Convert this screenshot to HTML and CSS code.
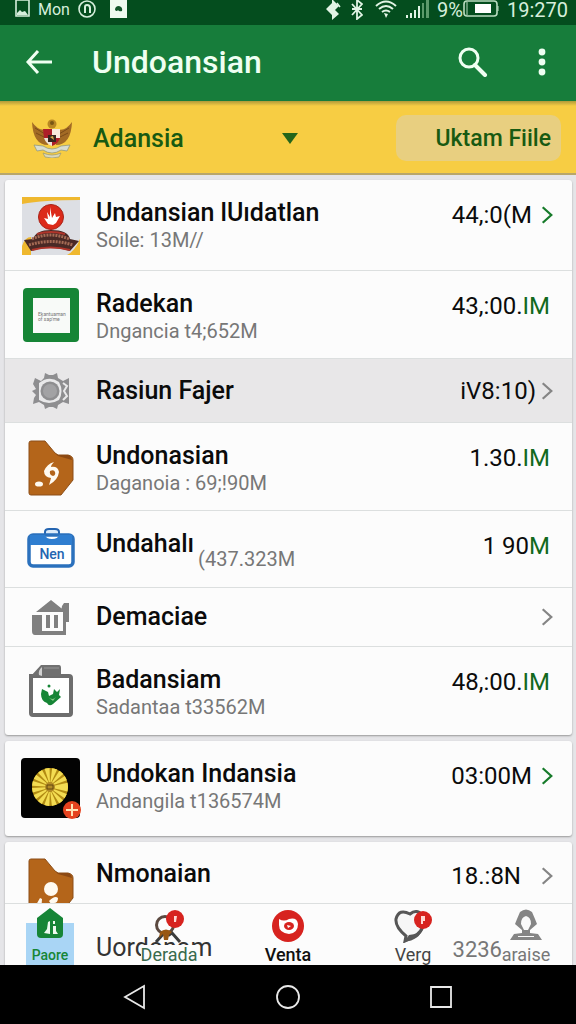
FILE: index.html
```html
<!DOCTYPE html>
<html lang="id">

<head>
  <meta charset="UTF-8" />
  <meta name="viewport" content="width=device-width, initial-scale=1.0" />
  <title>Undoansian</title>
  <link rel="stylesheet" href="styles.css">
</head>

<body>
  <!-- shared shapes -->
  <svg class="defs" aria-hidden="true">
    <symbol id="chevron" viewBox="0 0 14 22">
      <path d="M2 2l10 9-10 9" fill="none" stroke="currentColor" stroke-width="2.6" />
    </symbol>
    <symbol id="folder" viewBox="0 0 46 56">
      <path d="M3 1h14l10 12 3 2h10q5 1 5 5v20L33 55H3q-2 0-2-2V3q0-2 2-2z" fill="#b4651a" stroke="#8c4f19" />
      <path d="M27 13l3 3 14 4q-1-5-5-5h-9z" fill="#8c4913" />
    </symbol>
  </svg>

  <div class="app">
    <div class="status-bar">
      <div class="status-left">
        <svg width="15" height="17" viewBox="0 0 15 17"><path d="M1 0h13v16H1z" fill="none" stroke="#d6efdc" stroke-width="1.6" /><path d="M2 15v-2l3-3 2 2 3-1 3 4z" fill="#d6efdc" /></svg>
        <span>Mon</span>
        <svg width="18" height="18" viewBox="0 0 18 18"><circle cx="9" cy="9" r="8" fill="none" stroke="#d6efdc" stroke-width="1.6" /><path d="M7 13V7q0-2 2-2 3 0 3 3v5" fill="none" stroke="#d6efdc" stroke-width="2" /></svg>
        <svg class="status-card" width="17" height="18" viewBox="0 0 17 18"><path d="M0 0h17v18H0z" fill="#eefaf0" /><path d="M5 10q0-4 4-4 4 1 3 5-3 1-4-1-1 2-3 0z" fill="#12552a" /></svg>
      </div>
      <div class="status-right">
        <svg width="16" height="20" viewBox="0 0 16 20"><path d="M7 0v20l7-6-4-4 4-4-6-6M1 9l6-6v12z" fill="#e2f4e5" /><path d="M9 5v10M12 3l3 4" stroke="#e2f4e5" stroke-width="1.5" /></svg>
        <svg class="bt" width="12" height="20" viewBox="0 0 12 20"><path d="M1 4l10 11-5 4V0l5 4L1 15M1 9h10" fill="none" stroke="#e2f4e5" stroke-width="1.8" /></svg>
        <svg width="22" height="18" viewBox="0 0 22 18"><path d="M1 6q10-9 20 0M4 9q7-6 14 0M7 12q4-3 8 0" fill="none" stroke="#e2f4e5" stroke-width="2" /><path d="M9 13l4 1-2 4z" fill="#e2f4e5" /></svg>
        <svg width="24" height="18" viewBox="0 0 24 18"><path d="M1 18v-3h2v3zM5 18v-5h2v5zM9 18v-8h2v8zM13 18V6h2v12z" fill="#e2f4e5" /><path d="M17 18V3h2v15zM21 18V0h3v18z" fill="#5c9a6b" /></svg>
        <span>9%</span>
        <svg class="battery" width="36" height="18" viewBox="0 0 36 18"><rect x="1" y="1" width="33" height="15" rx="3" fill="none" stroke="#b9dcc0" stroke-width="1.6" /><path d="M4 2v13M35 6v5" stroke="#b9dcc0" /><path d="M12 4h16v9H12z" fill="#fff" /></svg>
        <span>19:270</span>
      </div>
    </div>

    <header class="app-bar">
      <button class="icon-btn" aria-label="Back">
        <svg width="28" height="26" viewBox="0 0 28 26"><path d="M13 2L3 13l10 11M3 13h24" fill="none" stroke="#effff2" stroke-width="3" /></svg>
      </button>
      <h1>Undoansian</h1>
      <button class="icon-btn" aria-label="Search">
        <svg width="30" height="30" viewBox="0 0 30 30"><circle cx="11" cy="11" r="9" fill="none" stroke="#effff2" stroke-width="3" /><path d="M17 18l10 10" stroke="#effff2" stroke-width="4" stroke-linecap="round" /></svg>
      </button>
      <button class="icon-btn menu-btn" aria-label="Menu">
        <svg width="8" height="28" viewBox="0 0 8 28"><g fill="#effff2"><circle cx="4" cy="4" r="3.4" /><circle cx="4" cy="14" r="3.4" /><circle cx="4" cy="24" r="3.4" /></g></svg>
      </button>
    </header>

    <div class="filter-bar">
      <svg class="crest" width="42" height="40" viewBox="0 0 42 40">
        <path d="M1 4q7 10 15 7l1 16Q2 27 1 4zM41 4q-7 10-15 7l-1 16Q40 27 41 4z" fill="#a36b25" />
        <path d="M4 10l10 6M5 15l10 5M38 10l-10 6M37 15l-10 5" stroke="#7b4b18" />
        <circle cx="21" cy="6" r="4.5" fill="#b88722" /><circle cx="21" cy="5" r="2" fill="#785614" />
        <path d="M12 11h9v9h-8z" fill="#ad1e29" /><path d="M21 11h8v9h-8z" fill="#f7e9dc" />
        <path d="M13 20h8v8q-6-2-8-8z" fill="#eee1d8" /><path d="M21 20h8q-2 6-8 8z" fill="#ad1e29" />
        <path d="M17 17h8v7h-8z" fill="#36251f" /><path d="M19 19l3-1 1 4z" fill="#d7ad49" />
        <path d="M3 27l9 1q9 6 18 0l9-1-3 6-6-1q-9 6-18 0l-6 1z" fill="#d8ddd0" stroke="#88927b" stroke-width=".7" />
        <path d="M12 35q9 4 18 0l-2 4q-7 2-14 0z" fill="#d9d8bd" stroke="#9a986c" stroke-width=".7" />
      </svg>
      <button class="region">
        <span>Adansia</span>
        <svg width="16" height="11" viewBox="0 0 16 11"><path d="M0 0h16L8 11z" fill="#24651a" /></svg>
      </button>
      <button class="file-btn">Uktam Fiile</button>
    </div>

    <main class="content">
      <section class="card">
        <a href="#" class="row row-tall">
          <span class="thumb">
            <svg width="58" height="58" viewBox="0 0 58 58">
              <path d="M0 0h58v58H0z" fill="#dddfe4" /><path d="M0 0h58v3Q22 3 0 7zM0 49q3-9 9-9v18H0zM45 58q8-4 13-16v16z" fill="#efb82f" />
              <circle cx="29" cy="20" r="12.5" fill="#dc2a1a" stroke="#a82419" />
              <path d="M28 10l2 11 3-5 1 4 4-1-4 7-3 2-5-1-4-6 4 1-1-7 3 5z" fill="#fff" />
              <path d="M2 43l9-1q3-9 18-9 17 0 19 9l9 2-9 10q-20-7-39 0z" fill="#4a2925" />
              <path d="M10 42q18-8 37 0M7 48q22-7 44 0" fill="none" stroke="#a56b55" stroke-width="3" stroke-dasharray="2 1" />
              <path d="M15 37q14-4 28 0M10 53q18-5 38 0" fill="none" stroke="#af352b" stroke-width="2" />
            </svg>
          </span>
          <span class="text"><span class="name">Undansian lUıdatlan</span><span class="sub">Soile: 13M//</span></span>
          <span class="value">44,:0(M</span>
          <svg class="chevron green"><use href="#chevron" /></svg>
        </a>
        <a href="#" class="row row-sub">
          <span class="thumb">
            <svg width="58" height="54" viewBox="0 0 58 54">
              <rect x="1" width="56" height="54" rx="4" fill="#168536" /><path d="M11 10h37v35H11z" fill="#f8faf8" />
              <text x="16" y="28" class="tiny">Ekantuaman</text><text x="16" y="33" class="tiny">of sap'me</text>
            </svg>
          </span>
          <span class="text"><span class="name">Radekan</span><span class="sub">Dngancia t4;652M</span></span>
          <span class="value">43,:00.<b>IM</b></span>
        </a>
        <a href="#" class="row row-single row-active">
          <span class="thumb">
            <svg width="40" height="38" viewBox="0 0 40 38">
              <path d="M13 6l1-5 4 2h4l4-2 1 5 5 3 6-3v26l-6-2-5 3-1 4-4-2h-4l-4 2-1-4-5-3-6 2 1-6 2-3-4-4 4-2-3-5 2-6 6 3z" fill="#8e8e90" />
              <path d="M8 11q10-8 20-1 5 9 0 18-10 6-20 0z" fill="#e9e9ea" /><circle cx="19" cy="19" r="9.5" fill="#8e8e90" /><circle cx="19" cy="19" r="7" fill="#a2a2a4" />
              <path d="M32 11l4 3-3 5 3 5-4 4" fill="none" stroke="#e9e9ea" stroke-width="2" />
            </svg>
          </span>
          <span class="text"><span class="name">Rasiun Fajer</span></span>
          <span class="value">iV8:10)</span>
          <svg class="chevron"><use href="#chevron" /></svg>
        </a>
        <a href="#" class="row row-sub">
          <span class="thumb">
            <svg width="46" height="56" viewBox="0 0 46 56">
              <use href="#folder" />
              <path d="M26 22q-7 2-10 9 0 6 7 7-1 4-2 7 9-5 10-13-1-6-8-5 0-2 3-5zm-4 9q4-2 5 1 1 3-2 4-4-1-3-5z" fill="#fffaf0" fill-rule="evenodd" />
              <ellipse cx="11" cy="44" rx="4" ry="2.6" fill="#fffaf0" />
            </svg>
          </span>
          <span class="text"><span class="name">Undonasian</span><span class="sub">Daganoia : 69;!90M</span></span>
          <span class="value">1.30.<b>IM</b></span>
        </a>
        <a href="#" class="row row-inline">
          <span class="thumb">
            <svg width="48" height="40" viewBox="0 0 48 40">
              <path d="M18 8V4q0-3 4-3h6q4 0 4 3v4" fill="#dcebfa" stroke="#2565b1" stroke-width="2" />
              <rect x="2" y="7" width="44" height="31" rx="4" fill="#fff" stroke="#2b71bd" stroke-width="3.5" />
              <path d="M3 7h15q1 4 7 4t7-4h13v10H3z" fill="#2f7ed0" />
              <text x="25" y="31" text-anchor="middle" class="bag-label">Nen</text>
            </svg>
          </span>
          <span class="text"><span class="name">Undahalı</span><span class="sub">(437.323M</span></span>
          <span class="value">1 90<b>M</b></span>
        </a>
        <a href="#" class="row row-single row-short">
          <span class="thumb">
            <svg width="40" height="37" viewBox="0 0 40 37">
              <path d="M5 13L20 1l15 12zM31 7l2-3h5v19h-3v13H4q-3 0-3-4V16h10v16h21V13h-2z" fill="#808080" />
              <path d="M15 16h4v13h-4zM23 16h4v13h-4z" fill="#808080" />
            </svg>
          </span>
          <span class="text"><span class="name">Demaciae</span></span>
          <svg class="chevron"><use href="#chevron" /></svg>
        </a>
        <a href="#" class="row row-sub">
          <span class="thumb">
            <svg width="44" height="53" viewBox="0 0 44 53">
              <path d="M4 12h36q2 0 2 2v35q0 2-2 2H4q-2 0-2-2V12z" fill="#fff" stroke="#6d6d6d" stroke-width="4" />
              <path d="M1 13L12 1h18q2 0 2 3v8H1z" fill="#707070" /><path d="M13 3q-4 3-3 8l3 1z" fill="#d1d1d1" /><path d="M15 4h15" stroke="#969696" />
              <path d="M13 25l6 3 1 4 4-2 1-5 3 3 3-3-1 6 2 2-8 7q-4 3-6-1-6-2-6-9z" fill="#168536" /><path d="M19 33q5 4 8 0l-3 4z" fill="#80c783" /><circle cx="20" cy="22" r="1.5" fill="#168536" />
            </svg>
          </span>
          <span class="text"><span class="name">Badansiam</span><span class="sub">Sadantaa t33562M</span></span>
          <span class="value">48,:00.<b>IM</b></span>
        </a>
      </section>

      <section class="card">
        <a href="#" class="row row-tall row-large">
          <span class="thumb">
            <svg width="60" height="62" viewBox="0 0 60 62">
              <rect width="59" height="60" rx="4" fill="#030303" /><ellipse cx="29" cy="29" rx="18" ry="19" fill="#b28b13" />
              <ellipse cx="29" cy="29" rx="11" ry="12" fill="none" stroke="#f3dc52" stroke-width="14" stroke-dasharray="3 1.6" />
              <circle cx="29" cy="29" r="5" fill="#b38b26" /><path d="M26 27h6v4h-6z" fill="none" stroke="#624610" />
              <circle cx="51" cy="52" r="9" fill="#e5431f" /><path d="M51 46v12M45 52h12" stroke="#ffe2b5" stroke-width="2" />
            </svg>
          </span>
          <span class="text"><span class="name">Undokan Indansia</span><span class="sub">Andangila t136574M</span></span>
          <span class="value">03:00M</span>
          <svg class="chevron green"><use href="#chevron" /></svg>
        </a>
      </section>

      <section class="card">
        <a href="#" class="row row-cut">
          <span class="thumb">
            <svg width="46" height="56" viewBox="0 0 46 56">
              <use href="#folder" />
              <circle cx="23" cy="31" r="7" fill="#fffaf0" /><path d="M8 47l4-7 2 1-1 15H9zM21 43q6-6 9-3 0 5-4 5 4 4 2 11h-8v-7h5z" fill="#fffaf0" />
            </svg>
          </span>
          <span class="text"><span class="name">Nmonaian</span></span>
          <span class="value">18.:8N</span>
          <svg class="chevron"><use href="#chevron" /></svg>
        </a>
        <a href="#" class="row row-under">
          <span class="thumb"></span>
          <span class="text"><span class="name">Uordonam</span></span>
          <span class="value">3236</span>
        </a>
      </section>

      <nav class="tabs">
        <a href="#" class="tab tab-home">
          <svg width="28" height="32" viewBox="0 0 28 32"><path d="M14 1l13 10v16q0 4-4 4H5q-4 0-4-4V11z" fill="#168536" /><path d="M8 26l3-4 1-7 2-1v13zM17 14h2v3h-2zM17 19h3v5l2 3h-5z" fill="#eefaf0" /></svg>
          <span>Paore</span>
        </a>
        <a href="#" class="tab tab-derada">
          <svg width="40" height="34" viewBox="0 0 40 34"><circle cx="16" cy="16" r="8.5" fill="none" stroke="#5b4940" stroke-width="3" /><path d="M7 33l9-10 4 3 3-2 8 9" fill="none" stroke="#3b3c3c" stroke-width="3" /><path d="M11 23q6-5 12 0l-3 3-1 5h-4l-1-6-4 4z" fill="#985712" /><circle cx="26" cy="10" r="9" fill="#d7231f" /><path d="M25 7h3l-1 6h-2z" fill="#ffd9d4" /></svg>
          <span>Derada</span>
        </a>
        <a href="#" class="tab tab-current">
          <svg width="34" height="34" viewBox="0 0 34 34"><circle cx="17" cy="17" r="16" fill="#d7231f" /><path d="M8 10q5 3 10 0 8-2 9 5 0 9-9 10-10-1-10-9z" fill="#fff" /><ellipse cx="18" cy="17" rx="5" ry="4" fill="#d7231f" /><path d="M16 16l4 1-3 2z" fill="#fff" /></svg>
          <span>Venta</span>
        </a>
        <a href="#" class="tab tab-verg">
          <svg width="38" height="34" viewBox="0 0 38 34"><path d="M11 32l1-5Q1 18 2 10 5-1 16 5q7-6 13 2 3 16-12 22z" fill="#f6f6f6" stroke="#565656" stroke-width="3" /><path d="M10 33l5-7q10-1 14-7-3 12-19 14z" fill="#565656" /><circle cx="29" cy="11" r="9" fill="#d7231f" /><path d="M27 7h4v5h-2v3h-2z" fill="#ffd9d4" /></svg>
          <span>Verg</span>
        </a>
        <a href="#" class="tab tab-profile">
          <svg width="32" height="32" viewBox="0 0 32 32"><path d="M10 3q6-5 12 0l3 7 2 5-7 6v3l8 1 4 6H0l4-6 8-1v-3l-7-6 2-5z" fill="#858585" /><path d="M16 7q5 1 5 8l-3 6h-4l-3-6q0-7 5-8zM8 27h16v1H8z" fill="#fafafa" /></svg>
          <span>araise</span>
        </a>
      </nav>
    </main>

    <div class="system-nav">
      <button aria-label="Back"><svg width="24" height="26" viewBox="0 0 24 26"><path d="M2 13L21 2v22z" fill="none" stroke="#e8e8e8" stroke-width="1.8" /></svg></button>
      <button aria-label="Home"><svg width="26" height="26" viewBox="0 0 26 26"><circle cx="13" cy="13" r="11" fill="none" stroke="#e8e8e8" stroke-width="1.8" /></svg></button>
      <button aria-label="Recent apps"><svg width="24" height="24" viewBox="0 0 24 24"><path d="M2 2h20v20H2z" fill="none" stroke="#e8e8e8" stroke-width="1.8" /></svg></button>
    </div>
  </div>
</body>

</html>
```
FILE: styles.css
```css
* {
  box-sizing: border-box;
}

body {
  margin: 0;
  background: #e5e5e8;
  font-family: Roboto, "Liberation Sans", sans-serif;
  color: #0b0b0b;
}

button {
  border: 0;
  padding: 0;
  background: none;
  font: inherit;
  color: inherit;
}

a {
  color: inherit;
  text-decoration: none;
}

svg {
  display: block;
  flex: none;
}

.defs {
  position: absolute;
  width: 0;
  height: 0;
}

.app {
  display: flex;
  flex-direction: column;
  height: 100vh;
}

/* status bar */
.status-bar {
  display: flex;
  justify-content: space-between;
  height: 25px;
  padding: 0 8px 0 15px;
  background: #044d1e;
  color: #d6efdc;
  font-size: 20px;
  line-height: 20px;
}

.status-left,
.status-right {
  display: flex;
  gap: 8px;
}

.status-left {
  font-size: 16px;
}

.status-card {
  margin-left: 6px;
}

.bt {
  margin: 0 4px 0 2px;
}

.battery {
  margin-left: -8px;
}

/* app bar */
.app-bar {
  display: flex;
  align-items: center;
  height: 76px;
  padding: 0 30px 2px 25px;
  background: #177d3b;
  color: #effff2;
}

.app-bar h1 {
  flex: 1;
  margin: 0 0 0 39px;
  font-size: 32px;
  font-weight: 500;
}

.menu-btn {
  margin-left: 50px;
}

/* filter bar */
.filter-bar {
  display: flex;
  align-items: center;
  height: 74px;
  padding: 2px 15px 0 31px;
  background: linear-gradient(#b09a3a, #f7cd43 5px);
  border-bottom: 2px solid #b8a66a;
  color: #185a12;
  font-size: 25px;
  font-weight: 500;
}

.region {
  display: flex;
  align-items: center;
  justify-content: space-between;
  width: 205px;
  margin-left: 20px;
}

.file-btn {
  height: 46px;
  margin-left: auto;
  padding: 0 10px 0 40px;
  border-radius: 10px;
  background: #e8cf80;
  font-size: 23px;
}

/* list */
.content {
  position: relative;
  flex: 1;
  min-height: 0;
  overflow: hidden;
  padding: 5px 4px 0 5px;
}

.card {
  margin-bottom: 6px;
  border-radius: 3px;
  background: #fcfcfc;
  box-shadow: 0 1px 2px #999;
  overflow: hidden;
}

.row {
  display: flex;
  align-items: flex-start;
  padding: 17px 22px 0 17px;
  border-bottom: 1px solid #dcdfdf;
}

.row:last-child {
  border-bottom: 0;
}

.row-tall {
  height: 91px;
}

.row-large {
  height: 95px;
}

.row-sub {
  height: 88px;
}

.row-inline {
  height: 77px;
}

.row-single {
  align-items: center;
  height: 64px;
  padding-top: 0;
}

.row-short {
  height: 59px;
}

.row-active {
  background: #e8e7e8;
}

.thumb {
  display: flex;
  flex: none;
  justify-content: center;
  width: 58px;
}

.tiny {
  fill: #777;
  font-size: 5px;
}

.bag-label {
  fill: #2565b1;
  font-size: 14px;
  font-weight: 500;
}

.text {
  display: flex;
  flex: 1;
  flex-direction: column;
  margin: 2px 0 0 16px;
  white-space: nowrap;
}

.name {
  font-size: 25px;
  font-weight: 500;
  line-height: 28px;
}

.sub {
  color: #777;
  font-size: 20px;
  line-height: 26px;
}

.row-inline .text {
  flex-direction: row;
  gap: 4px;
}

.row-inline .sub {
  margin-top: 16px;
}

.row-single .text {
  margin-top: 0;
}

.value {
  margin-top: 4px;
  font-size: 24px;
  line-height: 28px;
}

.value b {
  color: #12691d;
  font-weight: 400;
}

.row-single .value {
  margin-top: 0;
}

.chevron {
  width: 12px;
  height: 20px;
  margin: 8px -3px 0 9px;
  color: #858585;
}

.row-single .chevron {
  margin-top: 0;
}

.row-active .chevron {
  margin-left: 5px;
}

.green {
  color: #177b2b;
}

.row-cut {
  height: 62px;
  padding-top: 16px;
  overflow: hidden;
}

.row-cut .chevron {
  margin-left: 20px;
}

.row-under {
  height: 63px;
  padding: 28px 70px 0 17px;
}

.row-under .name {
  color: #333;
  font-weight: 400;
}

.row-under .value {
  color: #777;
  font-size: 22px;
}

/* tabs float over the end of the list */
.tabs {
  position: absolute;
  right: 0;
  bottom: 0;
  left: 0;
  display: flex;
  justify-content: space-between;
  height: 63px;
}

.tab {
  display: flex;
  flex-direction: column;
  align-items: center;
  justify-content: space-between;
  width: 100px;
  padding-top: 7px;
  color: #444;
  font-size: 18px;
  line-height: 20px;
}

.tab-home {
  width: 48px;
  margin: 0 26px;
  padding: 5px 0 0;
  background: linear-gradient(#a9d5f5, #a9d5f5) 0 100% / 100% 42px no-repeat;
  color: #168536;
  font-size: 14px;
  font-weight: 500;
}

.tab-derada {
  color: #386a4c;
}

.tab-derada span {
  background: #fcfcfc;
}

.tab-current {
  color: #111;
  font-weight: 500;
}

.tab-verg {
  padding-left: 12px;
}

.tab-profile {
  color: #777;
}

/* system navigation */
.system-nav {
  display: flex;
  align-items: center;
  justify-content: center;
  gap: 128px;
  height: 59px;
  padding-top: 5px;
  background: #000;
}
```
